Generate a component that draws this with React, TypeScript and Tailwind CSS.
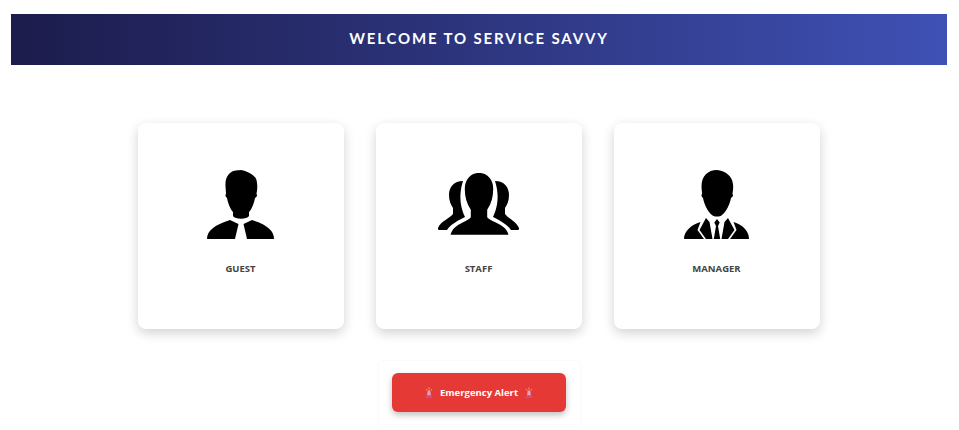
const Guest = () => (
  <svg viewBox="206 168 70 72" className="w-[70px] h-[72px]" fill="#000">
    <path d="M241 170C236 170.500 233 170 229 174C226 177 225.300 181 225.500 186C225.600 189 226 191 226 194C225 195 225.500 197 227 198C228 203 230 209 233 212L233 216C235 219.500 247 219.500 249 216L249 212C252 209 254 203 255 198C257 197 257.500 195 256.500 194C257 190 258 187 256.500 180C255 175 248 171.500 241 170Z" />
    <path d="M230 220L238.500 224L235 239L207 239C207 231 214 225 230 220Z" />
    <path d="M252 220L243.500 224L247 239L274 239C274 231 268 225 252 220Z" />
  </svg>
);

const Staff = () => (
  <svg viewBox="436 170 86 66" className="w-[86px] h-[66px]" fill="#000">
    <path d="M463 180C454 180 449 186 449 194C449 200 451 204 453 207L453 213C449 218 441 220 438 227C438 228 438 229 439 229L447 229C451 223 459 219 465 216C461 208 458 195 463 180Z" />
    <path d="M495 180C504 180 509 186 509 194C509 200 507 204 505 207L505 213C509 218 516 220 519 227C519 228 519 229 518 229L511 229C507 223 499 219 493 216C497 208 500 195 495 180Z" />
    <path stroke="#fff" strokeWidth="1.600" d="M479 171C470 171.500 464 178 464 188C464 195 466 203 470 209L470 216C466 221 452 222 449.500 234.500L509.500 234.500C507 222 492 221 488 216L488 209C492 203 494 195 494 188C494 178 488 171.500 479 171Z" />
  </svg>
);

const Manager = () => (
  <svg viewBox="682 168 70 72" className="w-[70px] h-[72px]" fill="#000">
    <path d="M717 170C708 170 701.500 176 701.500 186C701.500 189 702 191 702 194C701 195 701.500 197 703 198C704 204 708 212 712 215C714 217 720 217 722 215C726 212 730 204 731 198C733 197 733.500 195 732.500 194C733 190 734 186 732 180C730 175 725 171 717 170Z" />
    <path d="M700.500 222L697.500 230L704 239L684 239C684 231 691 225 700.500 222Z" />
    <path d="M733.500 222L736.500 230L730 239L749 239C749 231 743 225 733.500 222Z" />
    <path d="M706 218L709.500 222L712.500 239L706 239L699.500 230Z" />
    <path d="M728 218L724.500 222L721.500 239L728 239L734.500 230Z" />
    <path d="M717 219L714.300 222.500L716 226L713.800 239L720.200 239L718 226L719.700 222.500Z" />
  </svg>
);

const Siren = () => (
  <svg viewBox="0 0 10 12" className="w-[10px] h-[12px]">
    <path d="M3 8.500L3.800 3.500H6.200L7 8.500Z" fill="#eaa0ac" />
    <path d="M1.500 8.500H8.500V11H1.500Z" fill="#d4478a" />
    <path d="M5 .5V2.500M2 2L3 3.500M8 2L7 3.500" stroke="#f3c9c9" strokeWidth=".7" />
  </svg>
);

const Card = ({ label, children }: { label: string; children: React.ReactNode }) => (
  <div className="w-[206px] h-[206px] bg-white rounded-[8px] shadow-[0_4px_12px_rgba(0,0,0,0.18)] flex flex-col items-center pt-[45px]">
    <div className="h-[72px] flex items-center justify-center">{children}</div>
    <div className="mt-[22px] text-[9.500px] leading-[14px] font-bold text-[#444444] font-['Open_Sans',sans-serif]">{label}</div>
  </div>
);

export default function App() {
  return (
    <div className="w-[959px] h-[430px] bg-white overflow-hidden pt-[14px] font-['Open_Sans',sans-serif]">
      <header className="ml-[11px] w-[936px] h-[51px] pb-[2px] flex items-center justify-center bg-gradient-to-r from-[#1c1c4c] to-[#3f51b5] text-white text-[15px] font-bold tracking-[1.850px] font-['Lato',sans-serif]">
        WELCOME TO SERVICE SAVVY
      </header>
      <main className="mt-[58px] flex justify-center gap-8 pr-[2px]">
        <Card label="GUEST"><Guest /></Card>
        <Card label="STAFF"><Staff /></Card>
        <Card label="MANAGER"><Manager /></Card>
      </main>
      <div className="mt-[32px] ml-[379px] w-[201px] h-[63px] bg-white shadow-[0_0_2px_rgba(0,0,0,0.06)] flex items-center pl-[13px]">
        <button className="w-[174px] h-[39px] pt-px rounded-[6px] bg-[#e53935] shadow-[0_3px_6px_rgba(0,0,0,0.25)] flex items-center justify-center gap-[6px] text-white text-[9.500px] font-bold">
          <Siren />
          <span>Emergency Alert</span>
          <Siren />
        </button>
      </div>
    </div>
  );
}
